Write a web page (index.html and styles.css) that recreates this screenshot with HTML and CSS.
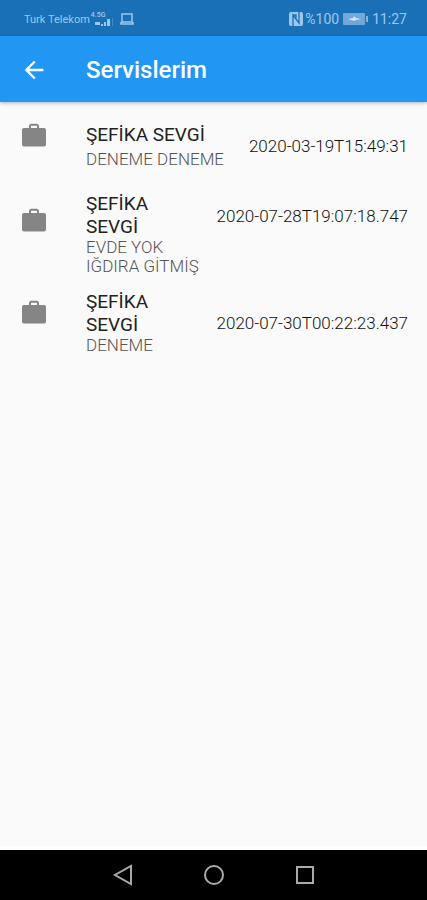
FILE: index.html
```
<!DOCTYPE html>
<html lang="tr">
<head>
<meta charset="utf-8">
<meta name="viewport" content="width=device-width, initial-scale=1">
<title>Servislerim</title>
<link rel="stylesheet" href="styles.css">
</head>
<body>
<svg class="defs" aria-hidden="true"><symbol id="case" viewBox="0 0 28 28"><path fill-rule="evenodd" d="M4 7h5V5c0-1.300 1-2.300 2.300-2.300h5.400C18 2.700 19 3.700 19 5v2h5c1.200 0 2 .8 2 2v14.500c0 1.200-.8 2-2 2H4c-1.200 0-2-.8-2-2V9c0-1.200.8-2 2-2zm7 0h6V4.700h-6z"/></symbol></svg>
<div class="status">
  <div class="group">
    <span class="carrier">Turk Telekom</span>
    <span class="network">
      <span class="gen">4.5G</span>
      <svg class="signal" viewBox="0 0 18 8"><path d="M0 4h5v3H0zM6 6h2v2H6zM9 4h2v4H9zM12 1h3v7h-3z"/><path opacity=".3" d="M17 0h1v8h-1z"/></svg>
    </span>
    <svg class="laptop" viewBox="0 0 14 12"><path d="M2 1h10v8H2zM1 9v2h12V9" fill="none" stroke="currentColor" stroke-width="1.500"/></svg>
  </div>
  <div class="group">
    <svg class="nfc" viewBox="0 0 14 14"><rect width="14" height="14" rx="2"/><path d="M4 14V3l6 8V0M4 3h3v3" fill="none" stroke="#1a70b7" stroke-width="1.300"/></svg>
    <span>%100</span>
    <svg class="battery" viewBox="0 0 25 12"><rect width="22" height="12" rx="1" opacity=".65"/><path opacity=".8" d="M23 3h2v6h-2z"/><path fill="#d2e6f8" d="M5 6l5-1 1-2 2 2 5 1-5 1-2 1z"/></svg>
    <span class="clock">11:27</span>
  </div>
</div>
<header class="appbar">
  <button class="back" aria-label="Geri"><svg viewBox="0 0 24 24"><path d="M20 11H7.830l5.590-5.590L12 4l-8 8 8 8 1.410-1.410L7.830 13H20z"/></svg></button>
  <h1>Servislerim</h1>
</header>
<main>
  <ul class="list">
    <li class="tile">
      <svg class="case"><use href="#case"/></svg>
      <div class="text spaced"><h2>ŞEFİKA SEVGİ</h2><p>DENEME DENEME</p></div>
      <time>2020-03-19T15:49:31</time>
    </li>
    <li class="tile tall">
      <svg class="case"><use href="#case"/></svg>
      <div class="text"><h2>ŞEFİKA SEVGİ</h2><p>EVDE YOK IĞDIRA GİTMİŞ</p></div>
      <time>2020-07-28T19:07:18.747</time>
    </li>
    <li class="tile">
      <svg class="case"><use href="#case"/></svg>
      <div class="text"><h2>ŞEFİKA SEVGİ</h2><p>DENEME</p></div>
      <time>2020-07-30T00:22:23.437</time>
    </li>
  </ul>
</main>
<nav class="navbar">
  <button aria-label="Geri"><svg viewBox="0 0 22 22"><path d="M19 2v18L3 11z"/></svg></button>
  <button aria-label="Ana ekran"><svg viewBox="0 0 22 22"><circle cx="11" cy="11" r="9"/></svg></button>
  <button aria-label="Son uygulamalar"><svg viewBox="0 0 22 22"><path d="M3 3h16v16H3z"/></svg></button>
</nav>
</body>
</html>
```
FILE: styles.css
```
* { box-sizing: border-box; }
body {
  margin: 0;
  min-height: 100vh;
  display: flex;
  flex-direction: column;
  background: #fafafa;
  font-family: Roboto, sans-serif;
}
h1, h2, p, ul { margin: 0; padding: 0; }
button { border: 0; padding: 0; background: none; color: inherit; }
svg { display: block; fill: currentColor; }
.defs { position: absolute; width: 0; height: 0; }

.status {
  height: 36px;
  padding: 2px 20px 0 24px;
  display: flex;
  justify-content: space-between;
  align-items: center;
  background: #1a70b7;
  color: #9ec8eb;
  font-size: 14px;
}
.group { display: flex; align-items: center; }
.carrier { font-size: 11px; }
.network { margin: 0 7px 0 1px; }
.gen { display: block; font-size: 7px; line-height: 6px; font-weight: 500; }
.signal { width: 18px; height: 8px; margin-left: 4px; }
.laptop { width: 14px; height: 12px; }
.nfc { width: 14px; height: 14px; margin-right: 2px; }
.battery { width: 25px; height: 12px; margin: 0 4px; }

.appbar {
  height: 66px;
  padding: 2px 20px 0;
  display: flex;
  align-items: center;
  background: #2196f3;
  color: #fff;
  box-shadow: 0 1px 4px rgba(0, 0, 0, .3);
}
.back { width: 66px; }
.back svg { width: 28px; height: 28px; }
h1 { font-size: 24px; font-weight: 500; }

main { flex: 1; border-bottom: 4px solid #fff; }
.list { list-style: none; padding-top: 1px; }
.tile {
  min-height: 85px;
  padding: 4px 19px 4px;
  display: flex;
  align-items: center;
  color: #222;
}
.case {
  width: 28px;
  height: 28px;
  flex: none;
  align-self: flex-start;
  margin: 14px 38px 0 1px;
  color: #858585;
}
.text { flex: 1; }
.spaced { display: grid; gap: 4px; }
h2 { font-size: 19px; line-height: 23px; font-weight: 400; }
p { font-size: 17px; line-height: 19px; font-weight: 300; color: #555; }
time {
  flex: none;
  margin-left: 14px;
  font-size: 17px;
  line-height: 20px;
  font-weight: 300;
  color: #111;
}
.tall time { align-self: flex-start; margin-top: 14px; }

.navbar {
  height: 50px;
  padding: 0 77px;
  display: flex;
  background: #000;
  color: #aaa;
}
.navbar button { flex: 1; display: flex; align-items: center; justify-content: center; }
.navbar svg { width: 22px; height: 22px; fill: none; stroke: currentColor; stroke-width: 2; }
```
